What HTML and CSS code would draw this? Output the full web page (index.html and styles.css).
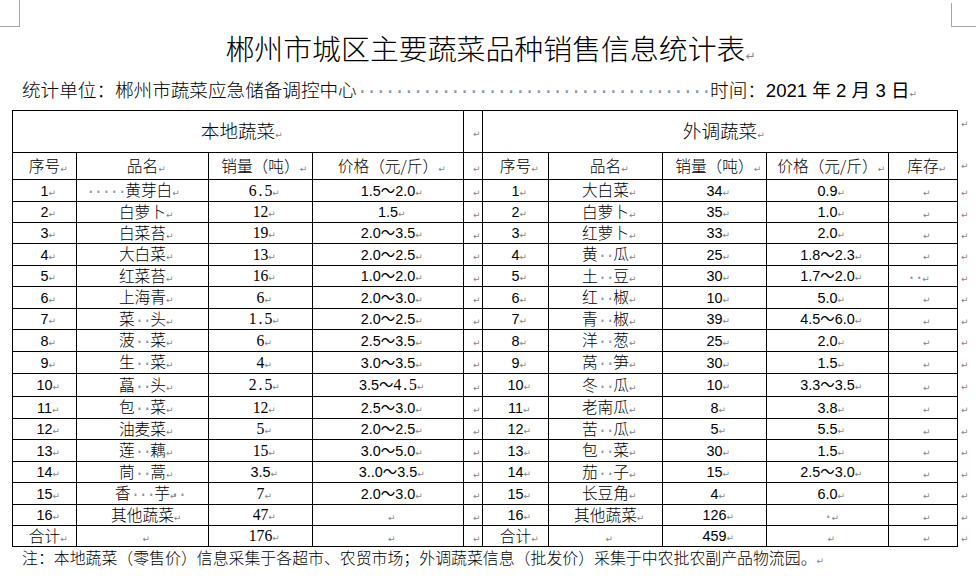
FILE: index.html
```html
<!DOCTYPE html>
<html lang="zh-CN">
<head>
<meta charset="utf-8">
<title>郴州市城区主要蔬菜品种销售信息统计表</title>
<link rel="stylesheet" href="styles.css">
</head>
<body>
<div class="marks"><span class="mark-l"></span><span class="mark-r"></span></div>
<h1 class="title">郴州市城区主要蔬菜品种销售信息统计表<span class="pm pm-big"></span></h1>
<p class="sub"><span>统计单位：郴州市蔬菜应急储备调控中心</span><span class="sp">······································</span><span>时间：</span><span class="date">2021 年 2 月 3 日</span><span class="pm"></span></p>
<table class="grid">
  <colgroup>
    <col class="c1"><col class="c2"><col class="c3"><col class="c4"><col class="c5">
    <col class="c6"><col class="c7"><col class="c8"><col class="c9"><col class="c10"><col class="c11">
  </colgroup>
  <tr class="h1"><td colspan="4" class="big">本地蔬菜</td><td></td><td colspan="5" class="big">外调蔬菜</td><td class="end"></td></tr>
  <tr class="h2"><td>序号</td><td>品名</td><td>销量（吨）</td><td>价格（元/斤）</td><td></td><td>序号</td><td>品名</td><td>销量（吨）</td><td>价格（元/斤）</td><td>库存</td><td class="end"></td></tr>
  <tr class="r22"><td class="t">1</td><td class="lft"><span class="sp">·····</span>黄芽白</td><td class="s">6<span class="hw">.</span>5</td><td class="t">1.5～2.0</td><td></td><td class="t">1</td><td>大白菜</td><td class="t">34</td><td class="t">0.9</td><td></td><td class="end"></td></tr>
  <tr class="r21"><td class="t">2</td><td>白萝卜</td><td class="s">12</td><td class="t">1.5</td><td></td><td class="t">2</td><td>白萝卜</td><td class="t">35</td><td class="t">1.0</td><td></td><td class="end"></td></tr>
  <tr class="r21"><td class="t">3</td><td>白菜苔</td><td class="s">19</td><td class="t">2.0～3.5</td><td></td><td class="t">3</td><td>红萝卜</td><td class="t">33</td><td class="t">2.0</td><td></td><td class="end"></td></tr>
  <tr class="r22"><td class="t">4</td><td>大白菜</td><td class="s">13</td><td class="t">2.0～2.5</td><td></td><td class="t">4</td><td>黄<span class="sp">··</span>瓜</td><td class="t">25</td><td class="t">1.8～2.3</td><td></td><td class="end"></td></tr>
  <tr class="r21"><td class="t">5</td><td>红菜苔</td><td class="s">16</td><td class="t">1.0～2.0</td><td></td><td class="t">5</td><td>土<span class="sp">··</span>豆</td><td class="t">30</td><td class="t">1.7～2.0</td><td class="sh"><span class="sp">··</span></td><td class="end"></td></tr>
  <tr class="r22"><td class="t">6</td><td>上海青</td><td class="s">6</td><td class="t">2.0～3.0</td><td></td><td class="t">6</td><td>红<span class="sp">··</span>椒</td><td class="t">10</td><td class="t">5.0</td><td></td><td class="end"></td></tr>
  <tr class="r21"><td class="t">7</td><td>菜<span class="sp">··</span>头</td><td class="s">1<span class="hw">.</span>5</td><td class="t">2.0～2.5</td><td></td><td class="t">7</td><td>青<span class="sp">··</span>椒</td><td class="t">39</td><td class="t">4.5～6.0</td><td></td><td class="end"></td></tr>
  <tr class="r22"><td class="t">8</td><td>菠<span class="sp">··</span>菜</td><td class="s">6</td><td class="t">2.5～3.5</td><td></td><td class="t">8</td><td>洋<span class="sp">··</span>葱</td><td class="t">25</td><td class="t">2.0</td><td></td><td class="end"></td></tr>
  <tr class="r22"><td class="t">9</td><td>生<span class="sp">··</span>菜</td><td class="s">4</td><td class="t">3.0～3.5</td><td></td><td class="t">9</td><td>莴<span class="sp">··</span>笋</td><td class="t">30</td><td class="t">1.5</td><td></td><td class="end"></td></tr>
  <tr class="r23"><td class="t">10</td><td>藠<span class="sp">··</span>头</td><td class="s">2<span class="hw">.</span>5</td><td class="t">3.5～<span class="s">4<span class="hw">.</span>5</span></td><td></td><td class="t">10</td><td>冬<span class="sp">··</span>瓜</td><td class="t">10</td><td class="t">3.3～3.5</td><td></td><td class="end"></td></tr>
  <tr class="r22"><td class="t">11</td><td>包<span class="sp">··</span>菜</td><td class="s">12</td><td class="t">2.5～3.0</td><td></td><td class="t">11</td><td>老南瓜</td><td class="t">8</td><td class="t">3.8</td><td></td><td class="end"></td></tr>
  <tr class="r21"><td class="t">12</td><td>油麦菜</td><td class="s">5</td><td class="t">2.0～2.5</td><td></td><td class="t">12</td><td>苦<span class="sp">··</span>瓜</td><td class="t">5</td><td class="t">5.5</td><td></td><td class="end"></td></tr>
  <tr class="r22"><td class="t">13</td><td>莲<span class="sp">··</span>藕</td><td class="s">15</td><td class="t">3.0～5.0</td><td></td><td class="t">13</td><td>包<span class="sp">··</span>菜</td><td class="t">30</td><td class="t">1.5</td><td></td><td class="end"></td></tr>
  <tr class="r21"><td class="t">14</td><td>茼<span class="sp">··</span>蒿</td><td class="t">3.5</td><td class="t">3..0～3.5</td><td></td><td class="t">14</td><td>茄<span class="sp">··</span>子</td><td class="t">15</td><td class="t">2.5～3.0</td><td></td><td class="end"></td></tr>
  <tr class="r22"><td class="t">15</td><td>香<span class="sp">···</span>芋<span class="sp tr2">··</span></td><td class="s">7</td><td class="t">2.0～3.0</td><td></td><td class="t">15</td><td>长豆角</td><td class="t">4</td><td class="t">6.0</td><td></td><td class="end"></td></tr>
  <tr class="r21"><td class="t">16</td><td>其他蔬菜</td><td class="s">47</td><td></td><td></td><td class="t">16</td><td>其他蔬菜</td><td class="t">126</td><td><span class="sp">·</span></td><td></td><td class="end"></td></tr>
  <tr class="r21"><td>合计</td><td></td><td class="s">176</td><td></td><td></td><td>合计</td><td></td><td class="t">459</td><td></td><td></td><td class="end"></td></tr>
</table>
<p class="note">注：本地蔬菜（零售价）信息采集于各超市、农贸市场；外调蔬菜信息（批发价）采集于中农批农副产品物流园。<span class="pm"></span></p>
</body>
</html>
```

FILE: styles.css
```css
* { box-sizing: border-box; }
html, body { margin: 0; padding: 0; background: #fff; }
body {
  width: 976px;
  height: 581px;
  overflow: hidden;
  font-family: "Noto Sans CJK SC", "Noto Sans", sans-serif;
  font-weight: 300;
  color: #000;
}

/* page corner crop marks */
.marks { display: flex; justify-content: space-between; height: 27px; }
.mark-l { width: 20px; height: 27px; border-right: 1px solid #a6a6a6; border-bottom: 1px solid #a6a6a6; }
.mark-r { width: 25px; height: 24px; margin-top: 3px; border-left: 1px solid #a6a6a6; border-bottom: 1px solid #a6a6a6; }

/* paragraph marks */
.pm::after, .grid td::after {
  content: "↵";
  font-family: "DejaVu Sans", sans-serif;
  font-size: 9px;
  font-weight: normal;
  letter-spacing: 0;
  line-height: 10px;
  color: #858585;
  margin-right: -7.5px;
}
.pm-big::after { font-size: 12px; margin-right: -10px; }

/* visible space marks */
.sp {
  font-family: "Liberation Mono", monospace;
  font-weight: normal;
  letter-spacing: -0.1em;
  line-height: 10px;
  color: #8a94a8;
}
.tr2 { margin-right: -1em; }

.title {
  margin: 0 0 0 20px;
  width: 931px;
  height: 40px;
  line-height: 40px;
  font-size: 28.9px;
  font-weight: 300;
  text-align: center;
  white-space: nowrap;
}

.sub {
  margin: 10px 0 0 22px;
  height: 23px;
  line-height: 23px;
  font-size: 18.6px;
  white-space: nowrap;
}
.date { font-family: "Liberation Sans", "Noto Sans CJK SC", sans-serif; font-weight: normal; }

.grid {
  border-collapse: collapse;
  table-layout: fixed;
  width: 964px;
  margin: 10px 0 0 12px;
  font-size: 15.7px;
}
.c1 { width: 64px; }
.c2 { width: 132px; }
.c3 { width: 104px; }
.c4 { width: 151px; }
.c5 { width: 19px; }
.c6 { width: 66px; }
.c7 { width: 114px; }
.c8 { width: 104px; }
.c9 { width: 122px; }
.c10 { width: 69px; }
.c11 { width: 19px; }

.grid td {
  border: 1px solid #000;
  padding: 0;
  text-align: center;
  vertical-align: middle;
  line-height: 14px;
  white-space: nowrap;
}
.grid td.end {
  border: none;
  text-align: left;
  vertical-align: top;
  padding: 5px 0 0 3px;
  line-height: 10px;
}
.h1 { height: 42px; }
.h2 { height: 27px; }
.r21 { height: 21px; }
.r22 { height: 22px; }
.r23 { height: 23px; }

.grid td.big { font-size: 18.6px; }
.grid td.lft { text-align: left; padding-left: 9px; }
.grid td.sh { padding-right: 17px; }

.t, .grid td.t { font-family: "Liberation Sans", "Noto Sans CJK SC", sans-serif; font-size: 14.4px; font-weight: normal; }
.s, .grid td.s { font-family: "Liberation Serif", "Noto Sans CJK SC", serif; font-size: 15.7px; font-weight: normal; }
.hw { display: inline-block; width: 0.5em; text-align: center; }

.note {
  margin: 0 0 0 22px;
  line-height: 22px;
  height: 22px;
  font-size: 15.9px;
  white-space: nowrap;
}
```
